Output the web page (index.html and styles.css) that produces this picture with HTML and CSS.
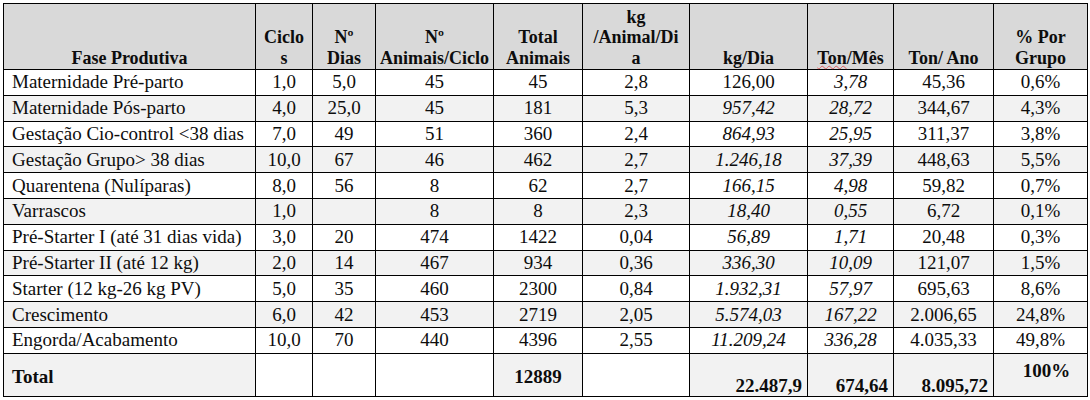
FILE: index.html
```html
<!DOCTYPE html>
<html lang="pt">
<head>
<meta charset="utf-8">
<title>Fase Produtiva</title>
<link rel="stylesheet" href="styles.css">
</head>
<body>
<table class="grid">
  <colgroup>
    <col class="c-fase"><col class="c-ciclos"><col class="c-dias"><col class="c-anim"><col class="c-total"><col class="c-kgan"><col class="c-kgdia"><col class="c-mes"><col class="c-ano"><col class="c-pct">
  </colgroup>
  <thead>
    <tr class="head">
      <th>Fase Produtiva</th>
      <th>Ciclo<br>s</th>
      <th>Nº<br>Dias</th>
      <th>Nº<br>Animais/Ciclo</th>
      <th>Total<br>Animais</th>
      <th>kg<br>/Animal/Di<br>a</th>
      <th>kg/Dia</th>
      <th><span class="spell">Ton</span>/Mês</th>
      <th>Ton/ Ano</th>
      <th>% Por<br>Grupo</th>
    </tr>
  </thead>
  <tbody>
    <tr><td class="name">Maternidade Pré-parto</td><td>1,0</td><td>5,0</td><td>45</td><td>45</td><td>2,8</td><td>126,00</td><td class="it">3,78</td><td>45,36</td><td>0,6%</td></tr>
    <tr class="alt"><td class="name">Maternidade Pós-parto</td><td>4,0</td><td>25,0</td><td>45</td><td>181</td><td>5,3</td><td class="it">957,42</td><td class="it">28,72</td><td>344,67</td><td>4,3%</td></tr>
    <tr><td class="name">Gestação Cio-control &lt;38 dias</td><td>7,0</td><td>49</td><td>51</td><td>360</td><td>2,4</td><td class="it">864,93</td><td class="it">25,95</td><td>311,37</td><td>3,8%</td></tr>
    <tr class="alt"><td class="name">Gestação Grupo&gt; 38 dias</td><td>10,0</td><td>67</td><td>46</td><td>462</td><td>2,7</td><td class="it">1.246,18</td><td class="it">37,39</td><td>448,63</td><td>5,5%</td></tr>
    <tr><td class="name">Quarentena (Nulíparas)</td><td>8,0</td><td>56</td><td>8</td><td>62</td><td>2,7</td><td class="it">166,15</td><td class="it">4,98</td><td>59,82</td><td>0,7%</td></tr>
    <tr class="alt"><td class="name">Varrascos</td><td>1,0</td><td></td><td>8</td><td>8</td><td>2,3</td><td class="it">18,40</td><td class="it">0,55</td><td>6,72</td><td>0,1%</td></tr>
    <tr><td class="name">Pré-Starter I (até 31 dias vida)</td><td>3,0</td><td>20</td><td>474</td><td>1422</td><td>0,04</td><td class="it">56,89</td><td class="it">1,71</td><td>20,48</td><td>0,3%</td></tr>
    <tr class="alt"><td class="name">Pré-Starter II (até 12 kg)</td><td>2,0</td><td>14</td><td>467</td><td>934</td><td>0,36</td><td class="it">336,30</td><td class="it">10,09</td><td>121,07</td><td>1,5%</td></tr>
    <tr><td class="name">Starter (12 kg-26 kg PV)</td><td>5,0</td><td>35</td><td>460</td><td>2300</td><td>0,84</td><td class="it">1.932,31</td><td class="it">57,97</td><td>695,63</td><td>8,6%</td></tr>
    <tr class="alt"><td class="name">Crescimento</td><td>6,0</td><td>42</td><td>453</td><td>2719</td><td>2,05</td><td class="it">5.574,03</td><td class="it">167,22</td><td>2.006,65</td><td>24,8%</td></tr>
    <tr><td class="name">Engorda/Acabamento</td><td>10,0</td><td>70</td><td>440</td><td>4396</td><td>2,55</td><td class="it">11.209,24</td><td class="it">336,28</td><td>4.035,33</td><td>49,8%</td></tr>
    <tr class="total">
      <td class="name shade">Total</td><td></td><td></td><td></td><td class="shade">12889</td><td></td>
      <td class="shade low">22.487,9</td><td class="shade low">674,64</td><td class="shade low">8.095,72</td><td class="shade pct">100%</td>
    </tr>
  </tbody>
</table>
</body>
</html>
```

FILE: styles.css
```css
html, body {
  margin: 0;
  padding: 0;
  background: #ffffff;
}

body {
  padding: 3px;
  font-family: "Liberation Serif", "DejaVu Serif", serif;
  color: #0d0d0d;
}

.grid {
  border-collapse: collapse;
  table-layout: fixed;
  width: 1084px;
  font-size: 19px;
}

.c-fase { width: 252px; }
.c-ciclos { width: 57px; }
.c-dias { width: 63px; }
.c-anim { width: 118px; }
.c-total { width: 89px; }
.c-kgan { width: 107px; }
.c-kgdia { width: 118px; }
.c-mes { width: 86px; }
.c-ano { width: 100px; }
.c-pct { width: 94px; }

.grid th,
.grid td {
  border: 1px solid #000;
  padding: 0 4px;
  text-align: center;
  white-space: nowrap;
  overflow: visible;
}

.head th {
  background: #d9d9d9;
  height: 64px;
  vertical-align: bottom;
  font-weight: bold;
  font-size: 18px;
  line-height: 20.5px;
  padding: 0 2px 1px 2px;
}

.spell {
  text-decoration: underline wavy #e06060;
  text-decoration-thickness: 1px;
  text-underline-offset: 1px;
}

tbody tr {
  height: 25.8px;
}

tbody td {
  vertical-align: middle;
  line-height: 20px;
  padding-top: 2px;
}

tbody tr.alt td {
  background: #f2f2f2;
}

td.name {
  text-align: left;
  padding-left: 8px;
}

td.it {
  font-style: italic;
}

tr.total {
  height: 43px;
}

tr.total td {
  font-weight: bold;
  font-size: 19px;
  padding-top: 4px;
}

tr.total td.shade {
  background: #f2f2f2;
}

tr.total td.low {
  vertical-align: bottom;
  text-align: right;
  padding-right: 5px;
  padding-bottom: 0;
}

tr.total td.pct {
  vertical-align: middle;
  padding-top: 0;
  padding-bottom: 8px;
  padding-left: 16px;
}
```
